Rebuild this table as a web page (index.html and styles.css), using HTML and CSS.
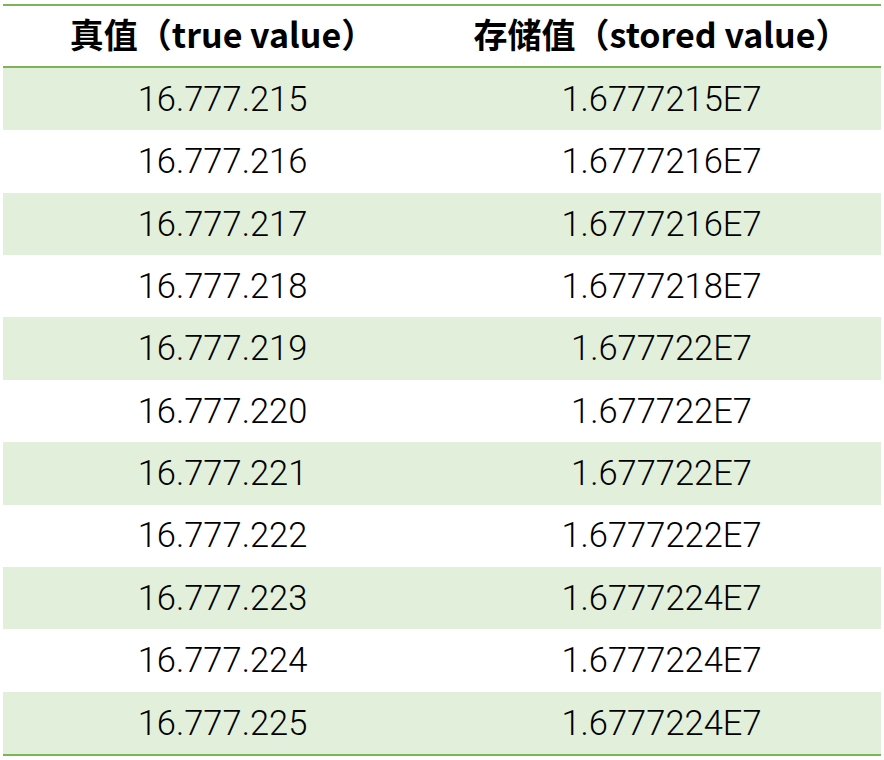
FILE: index.html
```html
<!DOCTYPE html>
<html lang="zh">
<head>
<meta charset="utf-8">
<title>真值与存储值</title>
<link rel="stylesheet" href="styles.css">
</head>
<body>
<div class="wrap">
  <table class="values">
    <thead>
      <tr><th>真值（true value）</th><th>存储值（stored value）</th></tr>
    </thead>
    <tbody>
      <tr class="alt"><td>16.777.215</td><td>1.6777215E7</td></tr>
      <tr><td>16.777.216</td><td>1.6777216E7</td></tr>
      <tr class="alt"><td>16.777.217</td><td>1.6777216E7</td></tr>
      <tr><td>16.777.218</td><td>1.6777218E7</td></tr>
      <tr class="alt"><td>16.777.219</td><td>1.677722E7</td></tr>
      <tr><td>16.777.220</td><td>1.677722E7</td></tr>
      <tr class="alt"><td>16.777.221</td><td>1.677722E7</td></tr>
      <tr><td>16.777.222</td><td>1.6777222E7</td></tr>
      <tr class="alt"><td>16.777.223</td><td>1.6777224E7</td></tr>
      <tr><td>16.777.224</td><td>1.6777224E7</td></tr>
      <tr class="alt"><td>16.777.225</td><td>1.6777224E7</td></tr>
    </tbody>
  </table>
</div>
</body>
</html>
```
FILE: styles.css
```css
html, body {
  margin: 0;
  padding: 0;
  background: #ffffff;
}
.wrap {
  padding: 4px 3px 0 3px;
}
.values {
  width: 878px;
  border-collapse: collapse;
  table-layout: fixed;
  border-top: 2px solid #7eb459;
  border-bottom: 2px solid #7eb459;
  color: #000;
}
.values th {
  height: 62px;
  padding: 0 0 5px 0;
  box-sizing: border-box;
  font-family: "Noto Sans CJK SC", sans-serif;
  font-weight: 700;
  font-size: 34px;
  text-align: center;
  vertical-align: middle;
  border-bottom: 2px solid #7eb459;
  line-height: 1;
}
.values td {
  height: 62.36px;
  padding: 0;
  font-family: Roboto, "Liberation Sans", sans-serif;
  font-weight: 300;
  font-size: 34.5px;
  text-align: center;
  vertical-align: middle;
  line-height: 1;
}
.values tr.alt td {
  background: #e2efda;
}
```
